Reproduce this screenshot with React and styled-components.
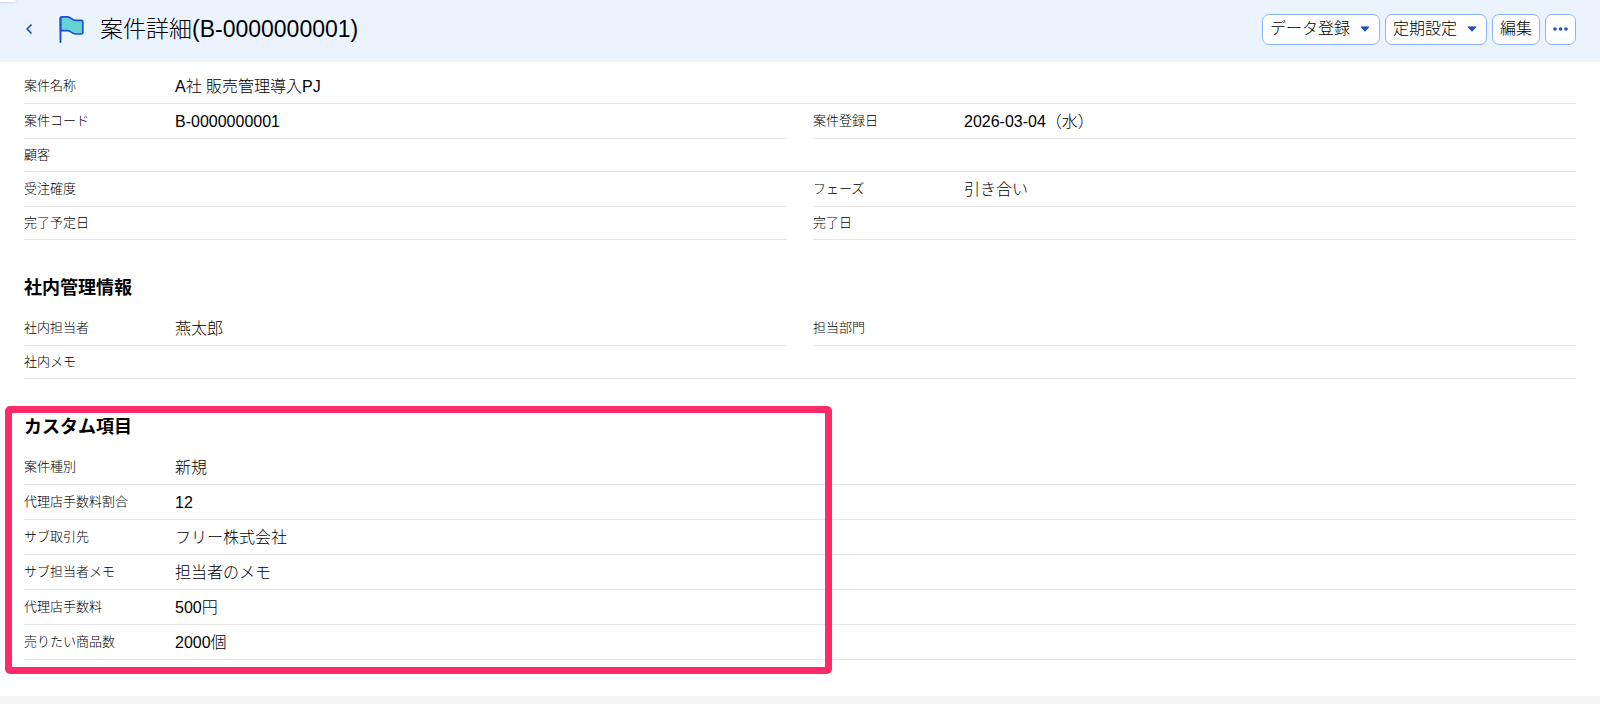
import React from 'react';
import styled, { createGlobalStyle } from 'styled-components';

const GlobalStyle = createGlobalStyle`
  *, *::before, *::after {
    box-sizing: border-box;
  }

  body {
    min-height: 100vh;
    margin: 0;
    background-color: #f6f5f6;
    color: #000;
    font-family: 'Liberation Sans', 'Noto Sans CJK JP', sans-serif;
    font-size: 16px;
    font-weight: 300;
  }
`;

const Page = styled.div`
  position: relative;
  background-color: #fff;
`;

const CornerTab = styled.div`
  width: 16px;
  height: 2px;
  position: absolute;
  top: 0;
  left: 0;
  border-bottom-right-radius: 2px;
  background-color: #fff;
  box-shadow: 0 0 3px rgba(80, 100, 150, 0.4);
`;

const Header = styled.header`
  min-height: 62px;
  padding: 0 24px 4px;
  display: flex;
  align-items: center;
  background-color: #ebf3ff;
`;

const BackLink = styled.a`
  width: 12px;
  height: 24px;
  margin-right: 22px;
  display: flex;
  align-items: center;
  color: #1e4fd0;
`;

const Title = styled.h1`
  margin: 0 auto 0 16px;
  font-size: 23px;
  font-weight: 300;
  line-height: 32px;
`;

const Toolbar = styled.div`
  display: flex;
  gap: 5px;
`;

const ToolbarButton = styled.button`
  height: 31px;
  padding: 0 ${props => props.$menu ? 9 : 7}px 0 7px;
  display: flex;
  align-items: center;
  justify-content: center;
  gap: 10px;
  border: solid 1px #8bb4ff;
  border-radius: 7px;
  background-color: #fff;
  color: #000;
  font: inherit;
  line-height: 24px;
  white-space: nowrap;
  cursor: pointer;

  &:hover {
    background-color: #f2f7ff;
  }
`;

const Content = styled.main`
  padding: 7px 24px 36px;
`;

const Section = styled.section`
  margin-top: ${props => props.$first ? 0 : 27}px;
  padding-top: ${props => props.$first ? 0 : 8}px;
  position: relative;
`;

const SectionTitle = styled.h2`
  margin: 0 0 9px;
  font-size: 18px;
  font-weight: 700;
  line-height: 27px;
`;

const Fields = styled.dl`
  margin: 0;
  display: grid;
  grid-template-columns: 1fr 1fr;
  column-gap: 26px;
`;

const FieldRow = styled.div`
  min-height: 33px;
  display: flex;
  align-items: center;
  grid-column: ${props => props.$half ? 'auto' : '1 / -1'};
  border-bottom: solid 1px #e6e6e6;
`;

const FieldLabel = styled.dt`
  width: 151px;
  flex-shrink: 0;
  font-size: 13px;
  line-height: 20px;
`;

const FieldValue = styled.dd`
  margin: 0;
  padding: ${props => props.$empty ? '0' : '6px 0 4px'};
  line-height: 24px;
`;

const HighlightFrame = styled.div`
  width: calc(50% + 51px);
  position: absolute;
  top: 0;
  bottom: -14px;
  left: -19px;
  border: solid 7px #ff2b69;
  border-radius: 5px;
  pointer-events: none;
`;

const ChevronIcon = () => (
  <svg width="12" height="12" viewBox="0 0 12 12" fill="none" aria-hidden="true">
    <path d="M7.5 1.5 3.2 6l4.300 4.500" stroke="currentColor" strokeWidth="1.7" />
  </svg>
);

const FlagIcon = () => (
  <svg width="26" height="28" viewBox="0 0 26 28" aria-hidden="true">
    <path
      d="M2.500 3Q2.500 1.800 3.700 1.800H9.500C13 1.800 14 5.300 17.500 5.300H23.500Q24.800 5.300 24.800 6.500V17.800Q24.800 19 23.500 19H17.500C14 19 13 15.700 9.500 15.700H2.500Z"
      fill="#66d3d3"
      stroke="#1e4fd0"
      strokeWidth="1.700"
      strokeLinejoin="round"
    />
    <path d="M2.500 3V27" stroke="#1e4fd0" strokeWidth="1.900" strokeLinecap="round" />
  </svg>
);

const CaretIcon = () => (
  <svg width="10" height="6" viewBox="0 0 10 6" aria-hidden="true">
    <path d="M1.200.9h7.600L5 5.300Z" fill="#1e4fd0" stroke="#1e4fd0" strokeLinejoin="round" />
  </svg>
);

const DotsIcon = () => (
  <svg width="15" height="4" viewBox="0 0 15 4" fill="#1e4fd0" aria-hidden="true">
    <circle cx="2" cy="2" r="1.800" />
    <circle cx="7.500" cy="2" r="1.800" />
    <circle cx="13" cy="2" r="1.800" />
  </svg>
);

const basicFields = [
  { label: '案件名称', value: 'A社 販売管理導入PJ' },
  { label: '案件コード', value: 'B-0000000001', half: true },
  { label: '案件登録日', value: '2026-03-04（水）', half: true },
  { label: '顧客' },
  { label: '受注確度', half: true },
  { label: 'フェーズ', value: '引き合い', half: true },
  { label: '完了予定日', half: true },
  { label: '完了日', half: true },
];

const internalFields = [
  { label: '社内担当者', value: '燕太郎', half: true },
  { label: '担当部門', half: true },
  { label: '社内メモ' },
];

const customFields = [
  { label: '案件種別', value: '新規' },
  { label: '代理店手数料割合', value: '12' },
  { label: 'サブ取引先', value: 'フリー株式会社' },
  { label: 'サブ担当者メモ', value: '担当者のメモ' },
  { label: '代理店手数料', value: '500円' },
  { label: '売りたい商品数', value: '2000個' },
];

const FieldList = ({ fields }) => (
  <Fields>
    {fields.map(({ label, value, half }) => (
      <FieldRow key={label} $half={half}>
        <FieldLabel>{label}</FieldLabel>
        <FieldValue $empty={!value}>{value}</FieldValue>
      </FieldRow>
    ))}
  </Fields>
);

export default function App() {
  return (
    <Page lang="ja">
      <GlobalStyle />
      <Header>
        <BackLink href="#" aria-label="戻る"><ChevronIcon /></BackLink>
        <FlagIcon />
        <Title>案件詳細(B-0000000001)</Title>
        <Toolbar>
          <ToolbarButton type="button" $menu>データ登録<CaretIcon /></ToolbarButton>
          <ToolbarButton type="button" $menu>定期設定<CaretIcon /></ToolbarButton>
          <ToolbarButton type="button">編集</ToolbarButton>
          <ToolbarButton type="button" aria-label="その他"><DotsIcon /></ToolbarButton>
        </Toolbar>
      </Header>
      <CornerTab />
      <Content>
        <Section $first>
          <FieldList fields={basicFields} />
        </Section>
        <Section>
          <SectionTitle>社内管理情報</SectionTitle>
          <FieldList fields={internalFields} />
        </Section>
        <Section>
          <SectionTitle>カスタム項目</SectionTitle>
          <FieldList fields={customFields} />
          <HighlightFrame />
        </Section>
      </Content>
    </Page>
  );
}
